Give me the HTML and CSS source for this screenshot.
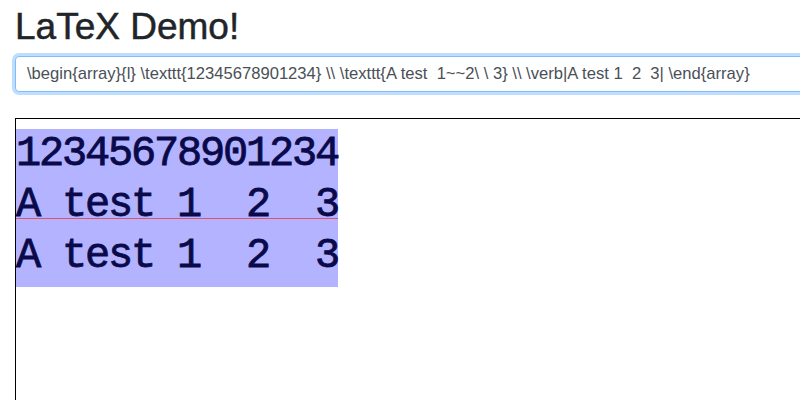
FILE: index.html
```html
<!DOCTYPE html>
<html>
<head>
<meta charset="utf-8">
<link rel="stylesheet" href="styles.css">
</head>
<body>
<div class="page">
  <h1 class="title">LaTeX Demo!</h1>
  <input class="source" type="text" value="\begin{array}{l} \texttt{12345678901234} \\ \texttt{A test  1~~2\ \ 3} \\ \verb|A test 1  2  3| \end{array}">
  <div class="output">
    <div class="rendered">
      <div class="row">12345678901234</div>
      <div class="row row-marked">A test 1  2  3<span class="baseline"></span></div>
      <div class="row">A test 1  2  3</div>
    </div>
  </div>
</div>
</body>
</html>
```
FILE: styles.css
```css
html, body {
  margin: 0;
  padding: 0;
  background: #fff;
  overflow: hidden;
}
.page {
  box-sizing: border-box;
  width: 800px;
  height: 400px;
  overflow: hidden;
  padding-left: 15px;
  font-family: "Liberation Sans", Arial, sans-serif;
  color: #212529;
}
.title {
  margin: 0 0 4px 0;
  padding-top: 2px;
  font-size: 37px;
  font-weight: 500;
  line-height: 50px;
  color: #212529;
  -webkit-text-stroke: 0.5px #212529;
}
.source {
  display: block;
  box-sizing: border-box;
  width: 820px;
  height: 36px;
  margin: 0;
  padding: 0 11px;
  border: 1px solid #80bdff;
  border-radius: 4px;
  box-shadow: 0 0 0 3px rgba(0, 123, 255, 0.25);
  font-family: "Liberation Sans", Arial, sans-serif;
  font-size: 16.6px;
  color: #495057;
  outline: none;
  background: #fff;
}
.output {
  box-sizing: border-box;
  width: 820px;
  height: 282px;
  margin-top: 26px;
  padding-top: 10px;
  border-top: 1px solid #000;
  border-left: 1px solid #000;
}
.rendered {
  display: inline-block;
  background: #b3b3ff;
  padding-bottom: 5px;
  color: #0a0a4a;
  font-family: "Liberation Mono", "Courier New", monospace;
  font-weight: normal;
  font-size: 42px;
  letter-spacing: -2.2px;
  -webkit-text-stroke: 0.8px #0a0a4a;
}
.row {
  line-height: 51px;
  height: 51px;
  white-space: pre;
  position: relative;
}
.baseline {
  position: absolute;
  left: 0;
  right: 0;
  top: 38px;
  height: 1px;
  background: #e0506f;
}
```
